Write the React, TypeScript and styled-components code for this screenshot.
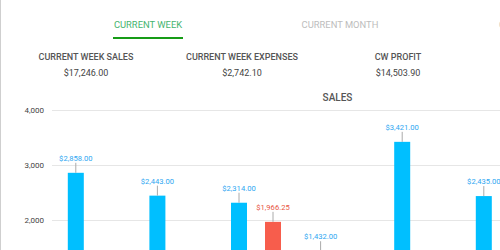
import styled, { createGlobalStyle } from "styled-components";

const GlobalStyle = createGlobalStyle`
  body {
    margin: 0;
    overflow: hidden;
    background: #fff;
    font-family: Roboto, "Liberation Sans", sans-serif;
  }
`;

const tabs = ["CURRENT WEEK", "CURRENT MONTH", "CURRENT YEAR"];

const stats = [
  { label: "CURRENT WEEK SALES", value: "$17,246.00" },
  { label: "CURRENT WEEK EXPENSES", value: "$2,742.10" },
  { label: "CW PROFIT", value: "$14,503.90" },
];

const sales = [2858, 2443, 2314, 1432, 3421, 2435, 2343];
const expenses = [0, 0, 1966.25, 0, 0, 0, 775.85];

const PLOT_LEFT = 51;
const PLOT_RIGHT = 622;
const CAT_W = 81.6;
const BAR_W = 16;
const BAR_OFF = 17;

const y = (v: number) => 226 - v * 0.055;
const money = (v: number) =>
  "$" + v.toLocaleString("en-US", { minimumFractionDigits: 2, maximumFractionDigits: 2 });

function BarWithLabel({ cx, value, color, labelColor }: { cx: number; value: number; color: string; labelColor: string }) {
  const top = y(value);
  return (
    <g>
      <rect x={cx - BAR_W / 2} y={top} width={BAR_W} height={300 - top} fill={color} />
      <line x1={cx} x2={cx} y1={top - 10} y2={top} stroke="#aaa" strokeWidth={1} />
      <text x={cx} y={top - 12} textAnchor="middle" fontSize={7.6} fill={labelColor}>
        {money(value)}
      </text>
    </g>
  );
}

function SalesChart() {
  return (
    <ChartSvg width={639} height={146}>
      {[2000, 3000, 4000].map((v) => (
        <g key={v}>
          <line x1={PLOT_LEFT} x2={PLOT_RIGHT} y1={y(v) + 0.5} y2={y(v) + 0.5} stroke="#e6e6e6" strokeWidth={1} />
          <text x={43} y={y(v) + 3} textAnchor="end" fontSize={8} fill="#444">
            {v.toLocaleString("en-US")}
          </text>
        </g>
      ))}
      {sales.map((s, i) => {
        const center = PLOT_LEFT + CAT_W * (i + 0.5);
        return (
          <g key={i}>
            <BarWithLabel cx={center - BAR_OFF} value={s} color="#00bfff" labelColor="#2ea7f2" />
            {expenses[i] > 0 && (
              <BarWithLabel cx={center + BAR_OFF} value={expenses[i]} color="#f75d4c" labelColor="#e8553f" />
            )}
          </g>
        );
      })}
    </ChartSvg>
  );
}

export default function App() {
  return (
    <Page>
      <GlobalStyle />
      <TabBar>
        {tabs.map((t, i) => (
          <Tab key={t}>
            <TabLabel $active={i === 0}>{t}</TabLabel>
          </Tab>
        ))}
      </TabBar>
      <Stats>
        {stats.map((s) => (
          <Stat key={s.label}>
            <StatLabel>{s.label}</StatLabel>
            <StatValue>{s.value}</StatValue>
          </Stat>
        ))}
      </Stats>
      <ChartTitle>SALES</ChartTitle>
      <SalesChart />
    </Page>
  );
}

const Page = styled.div`
  width: 640px;
  height: 250px;
  border-left: 1px solid #cfcfcf;
  overflow: hidden;
`;

const TabBar = styled.div`
  display: flex;
  padding: 19px 0 0 51px;
`;

const Tab = styled.div`
  width: 192px;
  flex: none;
  display: flex;
  justify-content: center;
`;

const TabLabel = styled.span<{ $active: boolean }>`
  font-size: 9.4px;
  line-height: 12px;
  padding: 0 1px 6px;
  color: ${(p) => (p.$active ? "#46b46e" : "#bdbdbd")};
  border-bottom: 2px solid ${(p) => (p.$active ? "#169c16" : "transparent")};
`;

const Stats = styled.div`
  display: grid;
  grid-template-columns: repeat(4, 156px);
  padding-left: 7px;
  margin-top: 12px;
`;

const Stat = styled.div`
  display: flex;
  flex-direction: column;
  align-items: center;
  gap: 4px;
`;

const StatLabel = styled.div`
  font-size: 9px;
  line-height: 12px;
  font-weight: 500;
  color: #555;
`;

const StatValue = styled.div`
  font-size: 9px;
  line-height: 12px;
  color: #444;
`;

const ChartTitle = styled.div`
  width: 571px;
  margin: 13px 0 0 51px;
  text-align: center;
  font-size: 10px;
  line-height: 12px;
  font-weight: 500;
  color: #555;
`;

const ChartSvg = styled.svg`
  display: block;
  font-family: Roboto, "Liberation Sans", sans-serif;
`;
